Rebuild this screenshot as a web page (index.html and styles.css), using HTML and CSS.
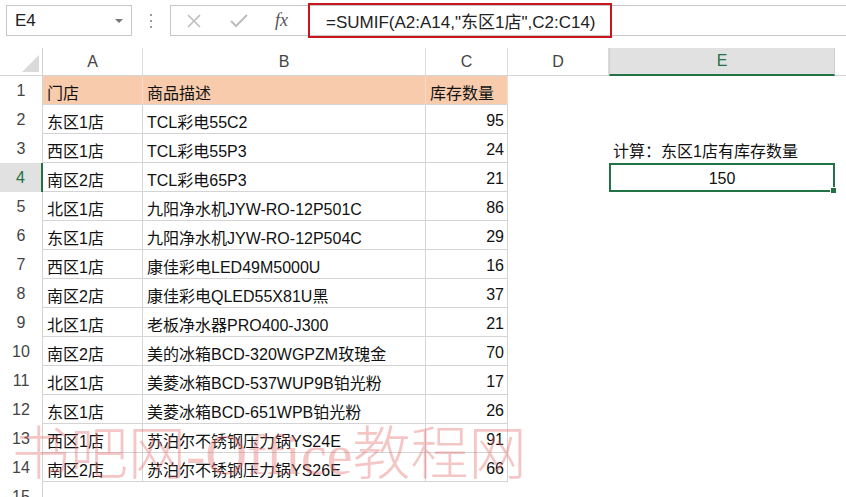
FILE: index.html
```html
<!DOCTYPE html>
<html lang="zh-CN">
<head>
  <meta charset="UTF-8">
  <title>SUMIF</title>
  <link rel="stylesheet" href="styles.css">
</head>
<body>
<div class="page">
  <div class="topbar">
    <div class="namebox"><span>E4</span><span class="drop"></span></div>
    <div class="grip"><i></i><i></i><i></i></div>
    <div class="fbar">
      <svg class="ico" width="16" height="16" viewBox="0 0 16 16"><path d="M2 2L14 14M14 2L2 14" stroke="#bdbdbd" stroke-width="1.6" fill="none"/></svg>
      <svg class="ico ok" width="20" height="16" viewBox="0 0 20 16"><path d="M2 8L7 13L18 2" stroke="#bdbdbd" stroke-width="2" fill="none"/></svg>
      <span class="fx">fx</span>
      <div class="formula">=SUMIF(A2:A14,"东区1店",C2:C14)</div>
    </div>
  </div>

  <div class="sheet">
    <div class="row head">
      <div class="corner"><span></span></div>
      <div class="ch">A</div>
      <div class="ch">B</div>
      <div class="ch">C</div>
      <div class="ch">D</div>
      <div class="ch sel">E</div>
      <div></div>
    </div>
    <div class="row">
      <div class="rh">1</div><div class="c top">门店</div><div class="c top">商品描述</div><div class="c top">库存数量</div>
    </div>
    <div class="row">
      <div class="rh">2</div><div class="c">东区1店</div><div class="c">TCL彩电55C2</div><div class="c num">95</div>
    </div>
    <div class="row">
      <div class="rh">3</div><div class="c">西区1店</div><div class="c">TCL彩电55P3</div><div class="c num">24</div>
      <div></div><div class="note">计算：东区1店有库存数量</div>
    </div>
    <div class="row">
      <div class="rh sel">4</div><div class="c">南区2店</div><div class="c">TCL彩电65P3</div><div class="c num">21</div>
      <div></div><div class="active">150<span class="handle"></span></div>
    </div>
    <div class="row">
      <div class="rh">5</div><div class="c">北区1店</div><div class="c">九阳净水机JYW-RO-12P501C</div><div class="c num">86</div>
    </div>
    <div class="row">
      <div class="rh">6</div><div class="c">东区1店</div><div class="c">九阳净水机JYW-RO-12P504C</div><div class="c num">29</div>
    </div>
    <div class="row">
      <div class="rh">7</div><div class="c">西区1店</div><div class="c">康佳彩电LED49M5000U</div><div class="c num">16</div>
    </div>
    <div class="row">
      <div class="rh">8</div><div class="c">南区2店</div><div class="c">康佳彩电QLED55X81U黑</div><div class="c num">37</div>
    </div>
    <div class="row">
      <div class="rh">9</div><div class="c">北区1店</div><div class="c">老板净水器PRO400-J300</div><div class="c num">21</div>
    </div>
    <div class="row">
      <div class="rh">10</div><div class="c">南区2店</div><div class="c">美的冰箱BCD-320WGPZM玫瑰金</div><div class="c num">70</div>
    </div>
    <div class="row">
      <div class="rh">11</div><div class="c">北区1店</div><div class="c">美菱冰箱BCD-537WUP9B铂光粉</div><div class="c num">17</div>
    </div>
    <div class="row">
      <div class="rh">12</div><div class="c">东区1店</div><div class="c">美菱冰箱BCD-651WPB铂光粉</div><div class="c num">26</div>
    </div>
    <div class="row">
      <div class="rh">13</div><div class="c">西区1店</div><div class="c">苏泊尔不锈钢压力锅YS24E</div><div class="c num">91</div>
    </div>
    <div class="row">
      <div class="rh">14</div><div class="c">南区2店</div><div class="c">苏泊尔不锈钢压力锅YS26E</div><div class="c num">66</div>
    </div>
    <div class="row">
      <div class="rh">15</div>
    </div>
  </div>

  <div class="watermark">书吧网-Office教程网</div>
</div>
</body>
</html>
```

FILE: styles.css
```css
body {
  margin: 0;
  background: #fff;
  font-family: "Liberation Sans", "Noto Sans CJK SC", sans-serif;
  color: #111;
}
.page {
  position: relative;
  width: 846px;
  height: 497px;
  overflow: hidden;
}

/* formula bar */
.topbar {
  display: flex;
  align-items: flex-start;
  height: 48px;
  padding-top: 5px;
  box-sizing: border-box;
}
.namebox {
  margin-left: 6px;
  width: 126px;
  height: 31px;
  border: 1px solid #c6c6c6;
  box-sizing: border-box;
  display: flex;
  align-items: center;
  justify-content: space-between;
  padding: 0 8px 0 8px;
  font-size: 17px;
  color: #222;
}
.drop {
  width: 0;
  height: 0;
  border-left: 4px solid transparent;
  border-right: 4px solid transparent;
  border-top: 4px solid #777;
}
.grip {
  width: 38px;
  height: 31px;
  display: flex;
  flex-direction: column;
  align-items: center;
  justify-content: center;
  gap: 4px;
}
.grip i {
  width: 2px;
  height: 2px;
  background: #9a9a9a;
}
.fbar {
  flex: 1;
  height: 31px;
  border: 1px solid #c6c6c6;
  border-right: none;
  box-sizing: border-box;
  display: flex;
  align-items: center;
}
.ico {
  margin-left: 15px;
}
.ico.ok {
  margin-left: 27px;
}
.fx {
  margin-left: 26px;
  font-family: "Liberation Serif", serif;
  font-style: italic;
  font-size: 18px;
  color: #555;
}
.formula {
  margin-left: 20px;
  width: 304px;
  height: 35px;
  border: 2px solid #c7161c;
  box-sizing: border-box;
  display: flex;
  align-items: center;
  padding-left: 16px;
  font-size: 17px;
  color: #222;
  white-space: nowrap;
}

/* grid */
.row {
  display: grid;
  grid-template-columns: 43px 100px 283px 82px 101px 226px 11px;
  height: 29px;
}
.row > div {
  box-sizing: border-box;
  display: flex;
  align-items: center;
  font-size: 16px;
  white-space: nowrap;
}
.row.head {
  height: 28px;
  border-bottom: 1px solid #d4d4d4;
  box-sizing: border-box;
}
.corner {
  border-right: 1px solid #d4d4d4;
  position: relative;
}
.corner span {
  position: absolute;
  right: 3px;
  bottom: 3px;
  width: 0;
  height: 0;
  border-left: 17px solid transparent;
  border-bottom: 17px solid #dadada;
}
.ch {
  justify-content: center;
  border-right: 1px solid #dcdcdc;
  font-size: 17px;
  color: #444;
}
.ch.sel {
  background: #e1e1e1;
  color: #217346;
  border-bottom: 2px solid #217346;
  margin-bottom: -1px;
  border-left: 1px solid #cfcfcf;
  border-right: 1px solid #cfcfcf;
}
.rh {
  justify-content: center;
  border-right: 1px solid #d4d4d4;
  font-size: 17px;
  color: #444;
}
.rh.sel {
  background: #e1e1e1;
  color: #217346;
  border-right: 2px solid #217346;
}
.c {
  padding: 3px 4px 0 4px;
  border-right: 1px solid #d4d4d4;
  border-bottom: 1px solid #d4d4d4;
}
.c.top {
  background: #f8cbad;
  border-right-color: #f3dccd;
}
.c.num {
  justify-content: flex-end;
  padding-right: 3px;
}
.note {
  padding: 3px 0 0 4px;
  overflow: visible;
}
.active {
  position: relative;
  justify-content: center;
  border: 2px solid #217346;
  padding-top: 2px;
}
.handle {
  position: absolute;
  right: -4px;
  bottom: -4px;
  width: 5px;
  height: 5px;
  background: #217346;
  border: 1px solid #fff;
}

.watermark {
  position: absolute;
  left: 12px;
  top: 420px;
  font-family: "Liberation Serif", "Noto Sans CJK SC", serif;
  font-size: 58px;
  font-weight: 300;
  line-height: 70px;
  color: rgba(228, 104, 104, 0.38);
  white-space: nowrap;
  pointer-events: none;
}
```
